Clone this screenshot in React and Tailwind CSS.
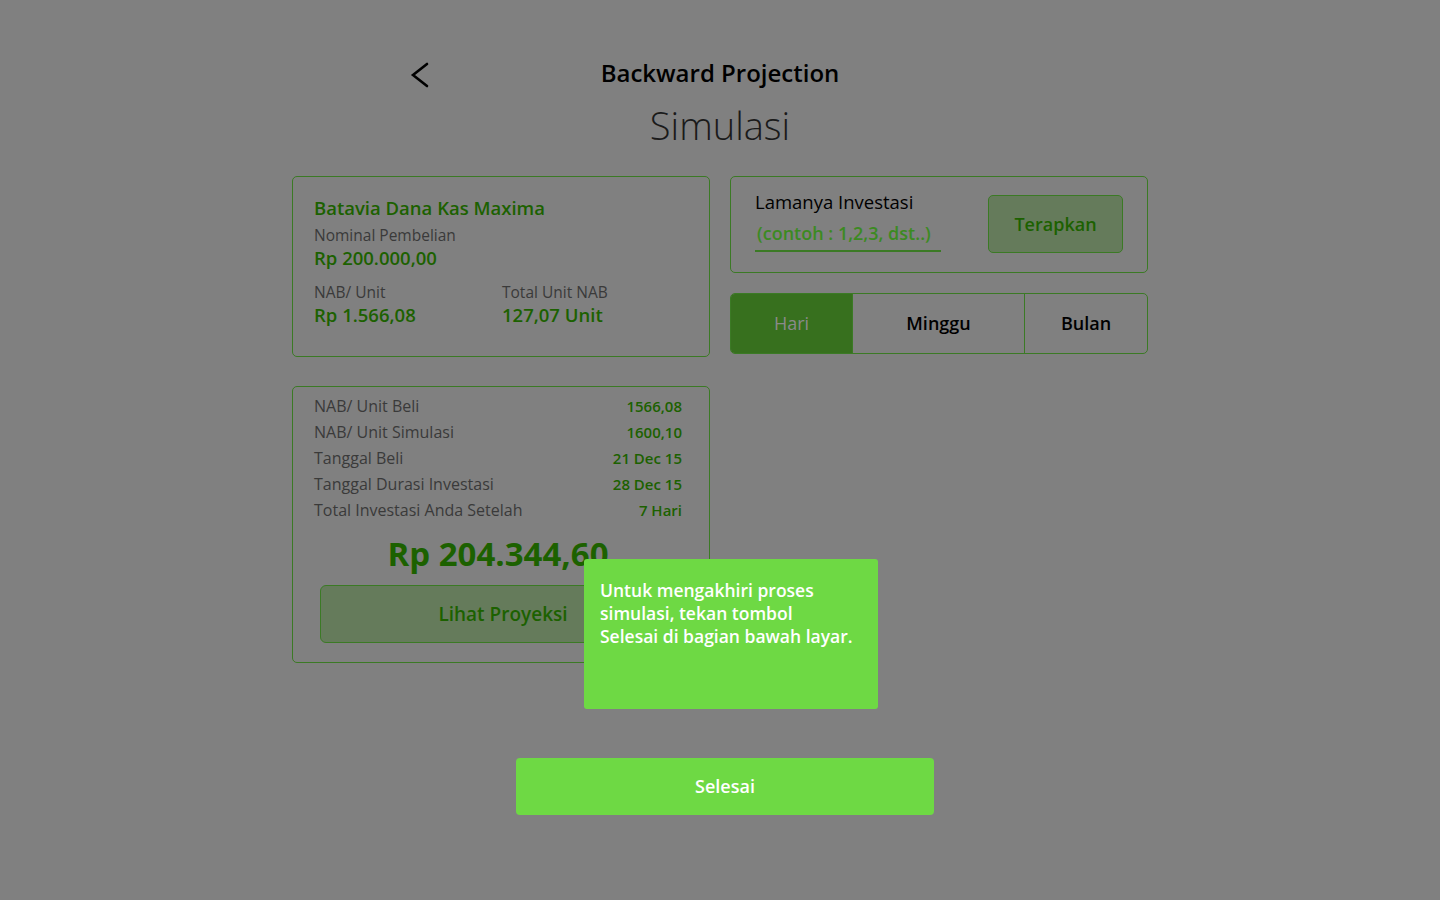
import React from "react";

const font = { fontFamily: '"Open Sans", "Noto Sans", sans-serif' };

function Row({ label, value }) {
  return (
    <div className="flex h-[26px] items-center justify-between">
      <span className="text-[16px] text-[#3a3a3a]">{label}</span>
      <span className="text-[15px] font-semibold text-[#1c6100]">{value}</span>
    </div>
  );
}

export default function App() {
  return (
    <div style={font} className="relative flex min-h-[900px] w-full flex-col items-center bg-[#808080]">
      <div className="relative mt-[57px] flex w-[856px] flex-col items-center">
        <button className="absolute left-[116px] top-[3px] text-black">
          <svg width="24" height="30" viewBox="0 0 24 30" fill="none" stroke="#000" strokeWidth="2.6" strokeLinecap="round">
            <path d="M19 4 L5 15 L19 26" />
          </svg>
        </button>
        <h1 className="h-[32px] text-[24px] font-semibold leading-[32px] text-black">Backward Projection</h1>
        <h2 className="mt-[13px] h-[46px] text-[38px] font-light leading-[46px] text-[#1a1a1a]">Simulasi</h2>

        <div className="mt-[28px] grid w-full grid-cols-2 gap-x-[20px]">
          <div className="flex flex-col gap-[29px]">
            <div className="h-[181px] rounded-[5px] border border-[#3b7a25] px-[21px] pt-[19px]">
              <div className="text-[18.5px] font-semibold leading-[24px] text-[#1c6100]">Batavia Dana Kas Maxima</div>
              <div className="mt-[5px] text-[15.5px] leading-[20px] text-[#3a3a3a]">Nominal Pembelian</div>
              <div className="mt-[1px] text-[18.5px] font-semibold leading-[24px] text-[#1c6100]">Rp 200.000,00</div>
              <div className="mt-[12px] grid grid-cols-[188px_1fr]">
                <div>
                  <div className="text-[15.5px] leading-[20px] text-[#3a3a3a]">NAB/ Unit</div>
                  <div className="mt-[1px] text-[18.5px] font-semibold leading-[24px] text-[#1c6100]">Rp 1.566,08</div>
                </div>
                <div>
                  <div className="text-[15.5px] leading-[20px] text-[#3a3a3a]">Total Unit NAB</div>
                  <div className="mt-[1px] text-[18.5px] font-semibold leading-[24px] text-[#1c6100]">127,07 Unit</div>
                </div>
              </div>
            </div>

            <div className="h-[277px] rounded-[5px] border border-[#3b7a25] pl-[21px] pr-[27px] pt-[6px]">
              <Row label="NAB/ Unit Beli" value="1566,08" />
              <Row label="NAB/ Unit Simulasi" value="1600,10" />
              <Row label="Tanggal Beli" value="21 Dec 15" />
              <Row label="Tanggal Durasi Investasi" value="28 Dec 15" />
              <Row label="Total Investasi Anda Setelah" value="7 Hari" />
              <div className="mt-[11px] text-center text-[33px] font-bold leading-[40px] text-[#1c6100]">Rp 204.344,60</div>
              <div className="mt-[11px] ml-[6px] flex h-[58px] w-[366px] items-center justify-center rounded-[6px] border border-[#3b7a25] bg-[#657b5b] text-[19px] font-semibold text-[#1c6100]">
                Lihat Proyeksi
              </div>
            </div>
          </div>

          <div className="flex flex-col gap-[20px]">
            <div className="flex h-[97px] items-start justify-between rounded-[5px] border border-[#3b7a25] pl-[24px] pr-[24px] pt-[13px]">
              <div className="flex flex-col">
                <span className="text-[18.5px] font-medium leading-[24px] text-black">Lamanya Investasi</span>
                <span className="mt-[7px] w-[186px] border-b-2 border-[#3b7a25] pb-[5px] pl-[2px] text-[18px] font-semibold leading-[24px] text-[#3c8a22]">
                  (contoh : 1,2,3, dst..)
                </span>
              </div>
              <div className="mt-[5px] flex h-[58px] w-[135px] items-center justify-center rounded-[5px] border border-[#3b7a25] bg-[#657b5b] text-[18px] font-semibold text-[#1c6100]">
                Terapkan
              </div>
            </div>

            <div className="flex h-[61px] overflow-hidden rounded-[5px] border border-[#3b7a25]">
              <div className="flex w-[121px] items-center justify-center bg-[#37701e] text-[18px] text-[#8a8a8a]">Hari</div>
              <div className="flex w-[173px] items-center justify-center border-x border-[#3b7a25] text-[18px] font-semibold text-black">Minggu</div>
              <div className="flex flex-1 items-center justify-center text-[18px] font-semibold text-black">Bulan</div>
            </div>
          </div>
        </div>

        <div className="absolute left-[292px] top-[502px] h-[150px] w-[294px] rounded-[3px] bg-[#6ed944] px-[16px] pt-[20px] text-[17.5px] font-semibold leading-[23px] text-white">
          Untuk mengakhiri proses
          <br />
          simulasi, tekan tombol
          <br />
          Selesai di bagian bawah layar.
        </div>

        <div className="mt-[95px] ml-[10px] flex h-[57px] w-[418px] items-center justify-center rounded-[4px] bg-[#6ed944] text-[18px] font-semibold text-white">
          Selesai
        </div>
      </div>
    </div>
  );
}
